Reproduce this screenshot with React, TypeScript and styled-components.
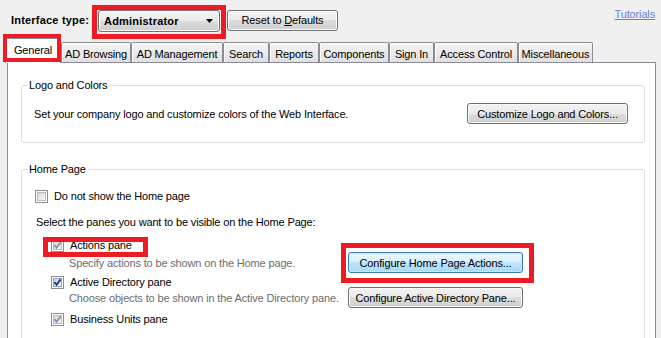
import styled, { createGlobalStyle } from 'styled-components';

const GlobalStyle = createGlobalStyle`
  html, body {
    margin: 0;
    padding: 0;
    background: #f0f0f0;
  }
  body {
    font-family: "Liberation Sans", Arial, sans-serif;
    font-size: 11px;
    letter-spacing: -0.15px;
    color: #000;
  }
`;

const Page = styled.div`
  width: 661px;
  height: 338px;
  overflow: hidden;
  background: #f0f0f0;
  display: flex;
  flex-direction: column;
`;

const TopBar = styled.div`
  height: 40px;
  flex-shrink: 0;
  display: flex;
  align-items: center;
  padding: 0 6px 0 11px;
`;

const FieldLabel = styled.span`
  width: 87px;
  font-weight: bold;
  letter-spacing: 0.2px;
`;

// red annotation frame drawn over a control
const Marked = styled.div<{ $t: number; $r: number; $b: number; $l: number; $w?: number }>`
  position: relative;
  display: inline-flex;
  align-self: flex-start;
  justify-self: start;
  &::after {
    content: '';
    position: absolute;
    top: ${(p) => -p.$t}px;
    right: ${(p) => -p.$r}px;
    bottom: ${(p) => -p.$b}px;
    left: ${(p) => -p.$l}px;
    border: ${(p) => p.$w ?? 5}px solid #ed1c24;
    pointer-events: none;
    z-index: 3;
  }
`;

const Button = styled.button<{ $w: number; $focus?: boolean }>`
  width: ${(p) => p.$w}px;
  height: 21px;
  box-sizing: border-box;
  padding: 0;
  font: inherit;
  letter-spacing: inherit;
  color: #000;
  border-radius: 3px;
  border: 1px solid ${(p) => (p.$focus ? '#3c7fb1' : '#707070')};
  background: ${(p) =>
    p.$focus
      ? 'linear-gradient(#eaf6fd 0%, #d9f0fc 50%, #bee6fd 50%, #a7d9f5 100%)'
      : 'linear-gradient(#f2f2f2 0%, #ebebeb 50%, #dddddd 50%, #cfcfcf 100%)'};
  box-shadow: inset 0 0 0 1px ${(p) => (p.$focus ? '#c5e8fb' : '#fcfcfc')};
  flex-shrink: 0;
`;

const Combo = styled.div`
  width: 122px;
  height: 22px;
  box-sizing: border-box;
  display: flex;
  align-items: center;
  justify-content: space-between;
  padding: 0 6px 0 5px;
  font-weight: bold;
  letter-spacing: 0.2px;
  border: 1px solid #707070;
  border-radius: 3px;
  background: linear-gradient(#f2f2f2 0%, #ebebeb 50%, #dddddd 50%, #cfcfcf 100%);
  box-shadow: inset 0 0 0 1px #fcfcfc;
`;

const TopMarked = styled(Marked)`
  align-self: center;
  margin-top: 1px;
`;

const ResetButton = styled(Button)`
  margin-left: 7px;
`;

const Tutorials = styled.a`
  margin-left: auto;
  align-self: flex-start;
  margin-top: 8px;
  color: #6a7fd6;
  text-decoration: underline;
  cursor: pointer;
`;

const TabStrip = styled.div`
  height: 24px;
  margin-top: -2px;
  flex-shrink: 0;
  display: flex;
  align-items: flex-end;
  padding-left: 5px;
`;

const Tab = styled.div<{ $w: number; $active?: boolean }>`
  width: ${(p) => p.$w}px;
  height: ${(p) => (p.$active ? 25 : 20)}px;
  margin-bottom: ${(p) => (p.$active ? -1 : 0)}px;
  box-sizing: border-box;
  display: flex;
  align-items: center;
  justify-content: center;
  padding-top: ${(p) => (p.$active ? 0 : 2)}px;
  padding-bottom: ${(p) => (p.$active ? 2 : 0)}px;
  border: 1px solid #898c95;
  border-bottom: none;
  border-radius: 2px 2px 0 0;
  position: relative;
  z-index: ${(p) => (p.$active ? 2 : 0)};
  background: ${(p) => (p.$active ? '#fff' : 'linear-gradient(#f5f5f5, #e0e0e0)')};
  box-shadow: ${(p) => (p.$active ? 'none' : 'inset 1px 1px 0 #fff')};
  white-space: nowrap;
`;

const Panel = styled.div`
  flex: 1;
  margin-left: 7px;
  width: 649px;
  box-sizing: border-box;
  border: 1px solid #898c95;
  border-bottom: none;
  background: #fff;
  padding: 16px 10px 0 13px;
`;

const Group = styled.fieldset<{ $gap?: number }>`
  margin: ${(p) => p.$gap ?? 0}px 0 0;
  padding: 0;
  min-width: 0;
  border: 1px solid #d5dfe5;
  border-radius: 3px;
`;

const Legend = styled.legend`
  margin-left: 5px;
  padding: 0 2px;
  line-height: 13px;
`;

const LogoRow = styled.div`
  display: flex;
  align-items: center;
  justify-content: space-between;
  padding: 11px 16px 18px 12px;
`;

const HomeBody = styled.div`
  display: flex;
  flex-direction: column;
  padding: 0 0 20px 13px;
`;

const CheckRow = styled.label<{ $top: number; $indent?: number }>`
  display: flex;
  align-items: center;
  gap: 6px;
  height: 13px;
  margin-top: ${(p) => p.$top}px;
  margin-left: ${(p) => p.$indent ?? 0}px;
  line-height: 13px;
`;

const Box = styled.span<{ $tone?: 'plain' | 'dim' | 'live' }>`
  width: 13px;
  height: 13px;
  box-sizing: border-box;
  flex-shrink: 0;
  position: relative;
  display: inline-flex;
  align-items: center;
  justify-content: center;
  border: 1px solid #8e8f8f;
  background: #fff;
  &::before {
    content: '';
    position: absolute;
    inset: 1px;
    border: 1px solid ${(p) => (p.$tone === 'live' ? '#86a3c9' : '#b7bbc1')};
    background: ${(p) =>
      p.$tone === 'live'
        ? 'linear-gradient(135deg, #cbd9ea, #f4f8fc)'
        : 'linear-gradient(135deg, #d6d8db, #f8f8f8)'};
  }
  svg {
    position: relative;
  }
`;

const Text = styled.div<{ $top: number; $indent?: number }>`
  margin-top: ${(p) => p.$top}px;
  margin-left: ${(p) => p.$indent ?? 0}px;
  line-height: 13px;
`;

const DescRow = styled.div<{ $top: number }>`
  display: grid;
  grid-template-columns: 279px auto;
  align-items: center;
  margin-top: ${(p) => p.$top}px;
  padding-left: 34px;
  height: 21px;
`;

const Desc = styled.span`
  color: #6d6d6d;
  white-space: nowrap;
`;

const Arrow = () => (
  <svg width="7" height="4" viewBox="0 0 7 4">
    <path d="M0 0h7L3.5 4z" fill="#000" />
  </svg>
);

const Check = ({ color }: { color: string }) => (
  <svg width="9" height="9" viewBox="0 0 9 9">
    <path d="M1.5 4.2 3.6 6.8 7.6 1.4" fill="none" stroke={color} strokeWidth="1.9" />
  </svg>
);

type CheckboxProps = { tone?: 'plain' | 'dim' | 'live' };

const Checkbox = ({ tone = 'plain' }: CheckboxProps) => (
  <Box $tone={tone}>
    {tone === 'dim' && <Check color="#8594b3" />}
    {tone === 'live' && <Check color="#1f3a78" />}
  </Box>
);

const tabs = [
  { label: 'General', w: 56 },
  { label: 'AD Browsing', w: 70 },
  { label: 'AD Management', w: 92 },
  { label: 'Search', w: 46 },
  { label: 'Reports', w: 50 },
  { label: 'Components', w: 70 },
  { label: 'Sign In', w: 45 },
  { label: 'Access Control', w: 84 },
  { label: 'Miscellaneous', w: 75 },
];

export default function App() {
  return (
    <Page>
      <GlobalStyle />
      <TopBar>
        <FieldLabel>Interface type:</FieldLabel>
        <TopMarked $t={5} $r={6} $b={7} $l={6}>
          <Combo>
            <span>Administrator</span>
            <Arrow />
          </Combo>
        </TopMarked>
        <ResetButton $w={111}>
          Reset to <u>D</u>efaults
        </ResetButton>
        <Tutorials>Tutorials</Tutorials>
      </TopBar>

      <TabStrip>
        {tabs.map((t, i) =>
          i === 0 ? (
            <Marked key={t.label} $t={4} $r={0} $b={0} $l={2} $w={4} style={{ alignSelf: 'flex-end' }}>
              <Tab $w={t.w} $active>
                {t.label}
              </Tab>
            </Marked>
          ) : (
            <Tab key={t.label} $w={t.w}>
              {t.label}
            </Tab>
          )
        )}
      </TabStrip>

      <Panel>
        <Group>
          <Legend>Logo and Colors</Legend>
          <LogoRow>
            <span>Set your company logo and customize colors of the Web Interface.</span>
            <Button $w={161}>Customize Logo and Colors...</Button>
          </LogoRow>
        </Group>

        <Group $gap={20}>
          <Legend>Home Page</Legend>
          <HomeBody>
            <CheckRow $top={14}>
              <Checkbox />
              Do not show the Home page
            </CheckRow>
            <Text $top={13} $indent={1}>
              Select the panes you want to be visible on the Home Page:
            </Text>
            <Marked $t={2} $r={16} $b={5} $l={8} style={{ marginTop: 10, marginLeft: 16 }}>
              <CheckRow $top={0}>
                <Checkbox tone="dim" />
                Actions pane
              </CheckRow>
            </Marked>
            <DescRow $top={0}>
              <Desc>Specify actions to be shown on the Home page.</Desc>
              <Marked $t={9} $r={11} $b={10} $l={7}>
                <Button $w={175} $focus>
                  Configure Home Page Actions...
                </Button>
              </Marked>
            </DescRow>
            <CheckRow $top={3} $indent={16}>
              <Checkbox tone="live" />
              Active Directory pane
            </CheckRow>
            <DescRow $top={-2}>
              <Desc>Choose objects to be shown in the Active Directory pane.</Desc>
              <Button $w={175}>Configure Active Directory Pane...</Button>
            </DescRow>
            <CheckRow $top={5} $indent={16}>
              <Checkbox tone="dim" />
              Business Units pane
            </CheckRow>
          </HomeBody>
        </Group>
      </Panel>
    </Page>
  );
}
